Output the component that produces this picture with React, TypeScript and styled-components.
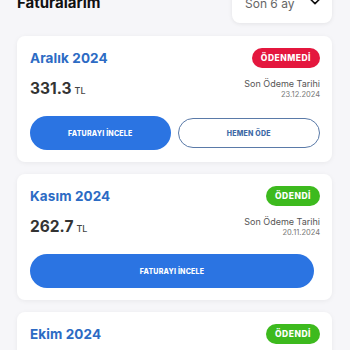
import React from "react";
import styled, { createGlobalStyle } from "styled-components";

const Global = createGlobalStyle`
  html, body { margin: 0; padding: 0; background: #f6f6f9; }
  body { font-family: "Inter", "DejaVu Sans", sans-serif; overflow: hidden; }
`;

const Page = styled.div`
  padding: 0 18px 0 17px;
  display: flex;
  flex-direction: column;
  gap: 12px;
`;

const Header = styled.div`
  display: flex;
  justify-content: space-between;
  align-items: flex-end;
  margin-top: -17px;
  margin-bottom: 1px;
`;

const Title = styled.h1`
  margin: 0 0 11px 0;
  font-size: 15px;
  line-height: 18px;
  font-weight: 700;
  color: #111;
`;

const Select = styled.div`
  width: 100px;
  height: 40px;
  box-sizing: border-box;
  background: #fff;
  border-radius: 8px;
  box-shadow: 0 1px 4px rgba(0, 0, 0, 0.08);
  display: flex;
  align-items: flex-start;
  justify-content: space-between;
  padding: 13px 9px 0 13px;
  font-size: 12px;
  line-height: 16px;
  color: #666;
`;

const ChevronBox = styled.span`
  display: flex;
  margin-top: -3px;
`;

const Card = styled.div`
  background: #fff;
  border-radius: 8px;
  box-shadow: 0 1px 5px rgba(0, 0, 0, 0.06);
  padding: 12px 12px 12px 13px;
  display: flex;
  flex-direction: column;
`;

const Row = styled.div`
  display: flex;
  justify-content: space-between;
  align-items: center;
`;

const Month = styled.div`
  font-size: 13.5px;
  font-weight: 700;
  color: #2c6bc4;
  letter-spacing: 0.1px;
`;

const Badge = styled.div<{ $paid: boolean }>`
  height: 20px;
  padding: 0 9px;
  border-radius: 10px;
  background: ${(p) => (p.$paid ? "#3dba1e" : "#e4173e")};
  color: #fff;
  font-size: 8.5px;
  font-weight: 800;
  letter-spacing: 0.5px;
  display: flex;
  align-items: center;
`;

const AmountRow = styled(Row)`
  margin-top: 10px;
`;

const Amount = styled.div`
  font-size: 15.5px;
  font-weight: 700;
  color: #333;
  display: flex;
  align-items: baseline;
  gap: 3px;
`;

const Unit = styled.span`
  font-size: 9px;
  font-weight: 500;
  color: #444;
`;

const Due = styled.div`
  text-align: right;
  display: flex;
  flex-direction: column;
  gap: 1px;
`;

const DueLabel = styled.div`
  font-size: 9px;
  color: #555;
`;

const DueDate = styled.div`
  font-size: 7.5px;
  color: #777;
`;

const Buttons = styled.div<{ $single: boolean }>`
  margin-top: 17px;
  display: flex;
  gap: 7px;
  padding-right: ${(p) => (p.$single ? "6px" : "0")};
`;

const Button = styled.button<{ $outline?: boolean }>`
  flex: 1;
  border-radius: 17px;
  font-family: inherit;
  font-size: 7px;
  font-weight: 800;
  letter-spacing: 0.2px;
  cursor: pointer;
  background: ${(p) => (p.$outline ? "#fff" : "#2b74e2")};
  color: ${(p) => (p.$outline ? "#3e6aa6" : "#fff")};
  border: ${(p) => (p.$outline ? "1.3px solid #5a7aa8" : "none")};
  height: ${(p) => (p.$outline ? "30px" : "34px")};
  margin: ${(p) => (p.$outline ? "2px 0" : "0")};
`;

const Chevron = () => (
  <svg width="16" height="16" viewBox="0 0 24 24" fill="none" stroke="#111" strokeWidth="2.4" strokeLinecap="round" strokeLinejoin="round">
    <path d="M4 8l8 8 8-8" />
  </svg>
);

type Bill = { month: string; amount: string; due: string; paid: boolean };

const bills: Bill[] = [
  { month: "Aralık 2024", amount: "331.3", due: "23.12.2024", paid: false },
  { month: "Kasım 2024", amount: "262.7", due: "20.11.2024", paid: true },
  { month: "Ekim 2024", amount: "248.5", due: "20.10.2024", paid: true },
];

export default function App() {
  return (
    <>
      <Global />
      <Page>
        <Header>
          <Title>Faturalarım</Title>
          <Select>
            <span>Son 6 ay</span>
            <ChevronBox>
              <Chevron />
            </ChevronBox>
          </Select>
        </Header>
        {bills.map((b) => (
          <Card key={b.month}>
            <Row>
              <Month>{b.month}</Month>
              <Badge $paid={b.paid}>{b.paid ? "ÖDENDİ" : "ÖDENMEDİ"}</Badge>
            </Row>
            <AmountRow>
              <Amount>
                {b.amount}
                <Unit>TL</Unit>
              </Amount>
              <Due>
                <DueLabel>Son Ödeme Tarihi</DueLabel>
                <DueDate>{b.due}</DueDate>
              </Due>
            </AmountRow>
            <Buttons $single={b.paid}>
              <Button>FATURAYI İNCELE</Button>
              {!b.paid && <Button $outline>HEMEN ÖDE</Button>}
            </Buttons>
          </Card>
        ))}
      </Page>
    </>
  );
}
